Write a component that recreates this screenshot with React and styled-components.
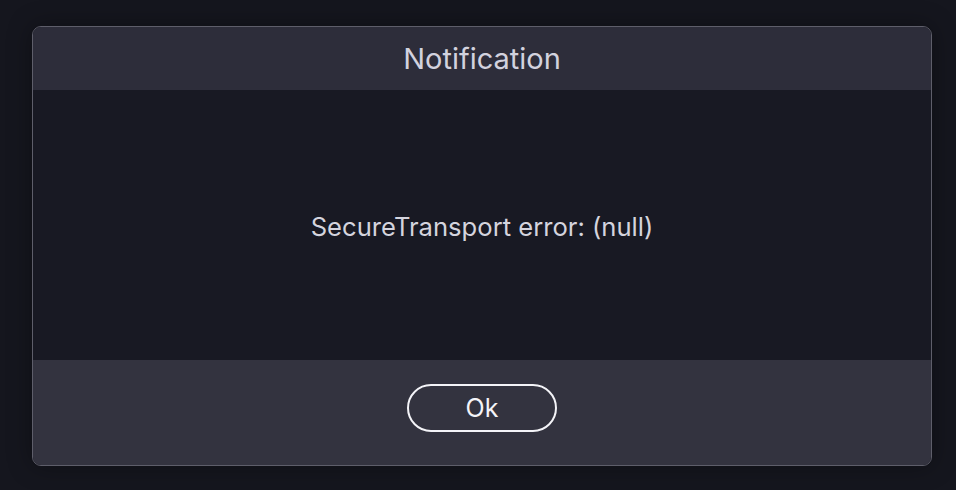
import React from "react";
import styled, { createGlobalStyle } from "styled-components";

const GlobalStyle = createGlobalStyle`
  html, body {
    margin: 0;
    padding: 0;
    background: #15161e;
    font-family: Inter, "Noto Sans", sans-serif;
  }
`;

const Page = styled.div`
  width: 956px;
  height: 490px;
  box-sizing: border-box;
  padding: 26px 24px 24px 32px;
`;

const Dialog = styled.div`
  width: 900px;
  height: 440px;
  box-sizing: border-box;
  border: 1.5px solid #5e5e6a;
  border-radius: 9px;
  overflow: hidden;
  display: flex;
  flex-direction: column;
  box-shadow: 0 0 24px rgba(0, 0, 0, 0.35);
`;

const Header = styled.div`
  height: 63px;
  flex: none;
  background: #2d2d3a;
  display: flex;
  align-items: center;
  justify-content: center;
  color: #d2d2de;
  font-size: 29px;
  box-sizing: border-box;
`;

const Body = styled.div`
  height: 270px;
  flex: none;
  background: #181923;
  display: flex;
  align-items: center;
  justify-content: center;
  color: #d4d4de;
  font-size: 25.6px;
  padding-top: 3px;
  box-sizing: border-box;
`;

const Footer = styled.div`
  flex: 1;
  background: #33333f;
  display: flex;
  align-items: center;
  justify-content: center;
`;

const Button = styled.button`
  width: 150px;
  height: 48px;
  border: 2px solid #f4f4f8;
  border-radius: 24px;
  background: transparent;
  color: #f4f4f8;
  font-family: Inter, "Noto Sans", sans-serif;
  font-size: 25px;
  cursor: pointer;
  margin-top: -10px;
`;

export default function App() {
  return (
    <>
      <GlobalStyle />
      <Page>
        <Dialog>
          <Header>Notification</Header>
          <Body>SecureTransport error: (null)</Body>
          <Footer>
            <Button>Ok</Button>
          </Footer>
        </Dialog>
      </Page>
    </>
  );
}
